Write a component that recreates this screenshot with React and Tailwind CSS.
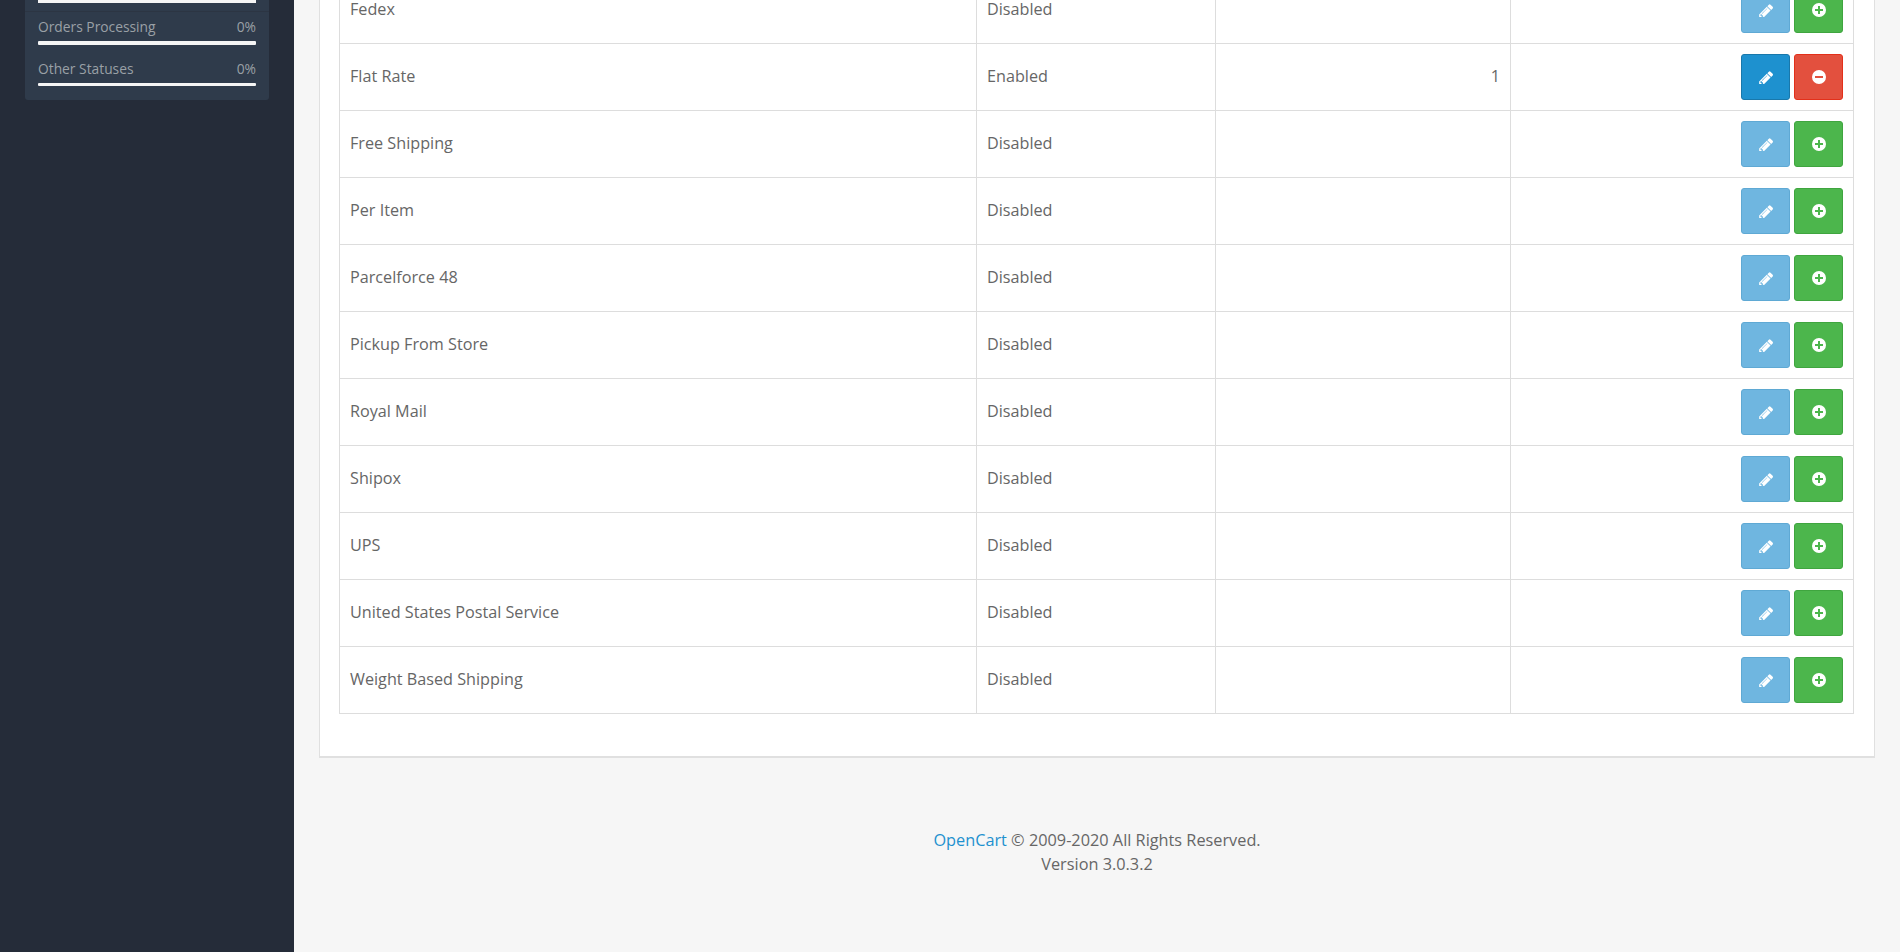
import React from "react";

const rows = [
  ["Fedex", "Disabled", ""],
  ["Flat Rate", "Enabled", "1"],
  ["Free Shipping", "Disabled", ""],
  ["Per Item", "Disabled", ""],
  ["Parcelforce 48", "Disabled", ""],
  ["Pickup From Store", "Disabled", ""],
  ["Royal Mail", "Disabled", ""],
  ["Shipox", "Disabled", ""],
  ["UPS", "Disabled", ""],
  ["United States Postal Service", "Disabled", ""],
  ["Weight Based Shipping", "Disabled", ""],
];

function Pencil() {
  return (
    <svg viewBox="0 0 1643 1536" className="w-[15px] h-[14px]" fill="#fff">
      <path d="M491 1536l91-91-235-235-91 91v107h128v128h107zm523-928q0-22-22-22-10 0-17 7l-542 542q-7 7-7 17 0 22 22 22 10 0 17-7l542-542q7-7 7-17zm-54-192l416 416-832 832h-416v-416zm683 96q0 53-37 90l-166 166-416-416 166-165q36-38 90-38 53 0 91 38l235 234q37 39 37 91z" />
    </svg>
  );
}

function RoundSign({ plus, color }) {
  return (
    <svg viewBox="0 0 14 14" className="w-[14px] h-[14px]">
      <circle cx="7" cy="7" r="7" fill="#fff" />
      <rect x="3" y="6" width="8" height="2" fill={color} />
      {plus && <rect x="6" y="3" width="2" height="8" fill={color} />}
    </svg>
  );
}

function Actions({ enabled }) {
  return (
    <div className="flex justify-end gap-[4px]">
      <button
        className={
          enabled
            ? "w-[49px] h-[46px] flex items-center justify-center rounded-[3px] border border-[#1978ab] bg-[#1e91cf]"
            : "w-[49px] h-[46px] flex items-center justify-center rounded-[3px] border border-[#5fa9d4] bg-[#6fb6e0]"
        }
      >
        <Pencil />
      </button>
      {enabled ? (
        <button className="w-[49px] h-[46px] flex items-center justify-center rounded-[3px] border border-[#e3301a] bg-[#e3503e]">
          <RoundSign color="#e3503e" />
        </button>
      ) : (
        <button className="w-[49px] h-[46px] flex items-center justify-center rounded-[3px] border border-[#3fa53f] bg-[#4cb64c]">
          <RoundSign plus color="#4cb64c" />
        </button>
      )}
    </div>
  );
}

function Stat({ label, barClass }) {
  return (
    <div className="h-[42px] px-[13px] pt-[5px] text-[#9aa0a6]">
      <div className="flex justify-between text-[13.8px] leading-[20px]">
        <span>{label}</span>
        <span>0%</span>
      </div>
      <div className={barClass} />
    </div>
  );
}

export default function App() {
  return (
    <div className="flex h-[952px] overflow-hidden bg-[#f6f6f6] font-['Open_Sans','Noto_Sans',sans-serif] text-[#666]">
      <aside className="w-[294px] shrink-0 bg-[#252c39]">
        <div className="ml-[25px] w-[244px] h-[100px] rounded-b-[3px] bg-[#2f3b4b] overflow-hidden">
          <div className="h-[3px] mx-[13px] bg-[#f5f5f5]" />
          <div className="h-[9px] border-b border-[#2c3543]" />
          <Stat label="Orders Processing" barClass="mt-[4px] h-[4px] rounded-[1px] bg-[#f5f5f5]" />
          <Stat label="Other Statuses" barClass="mt-[4px] h-[3px] rounded-[1px] bg-[#f5f5f5]" />
        </div>
      </aside>
      <main className="flex-1 min-w-0 pl-[25px] pr-[25px]">
        <div className="-mt-[24px] bg-white border-x border-b-2 border-[#e0e0e0] pl-[19px] pr-[20px] pb-[42px]">
          <table className="w-full table-fixed border-collapse text-[16.2px]">
            <colgroup>
              <col className="w-[637px]" />
              <col className="w-[239px]" />
              <col className="w-[295px]" />
              <col />
            </colgroup>
            <tbody>
              {rows.map(([name, status, order]) => (
                <tr key={name} className="h-[67px]">
                  <td className="border border-[#ddd] px-[10px] pb-[1px]">{name}</td>
                  <td className="border border-[#ddd] px-[10px] pb-[1px]">{status}</td>
                  <td className="border border-[#ddd] px-[10px] pb-[1px] text-right">{order}</td>
                  <td className="border border-[#ddd] px-[10px]">
                    <Actions enabled={status === "Enabled"} />
                  </td>
                </tr>
              ))}
            </tbody>
          </table>
        </div>
        <footer className="mt-[70px] text-center text-[16.3px] leading-[24px]">
          <div>
            <a className="text-[#1e91cf]">OpenCart</a> © 2009-2020 All Rights Reserved.
          </div>
          <div>Version 3.0.3.2</div>
        </footer>
      </main>
    </div>
  );
}
